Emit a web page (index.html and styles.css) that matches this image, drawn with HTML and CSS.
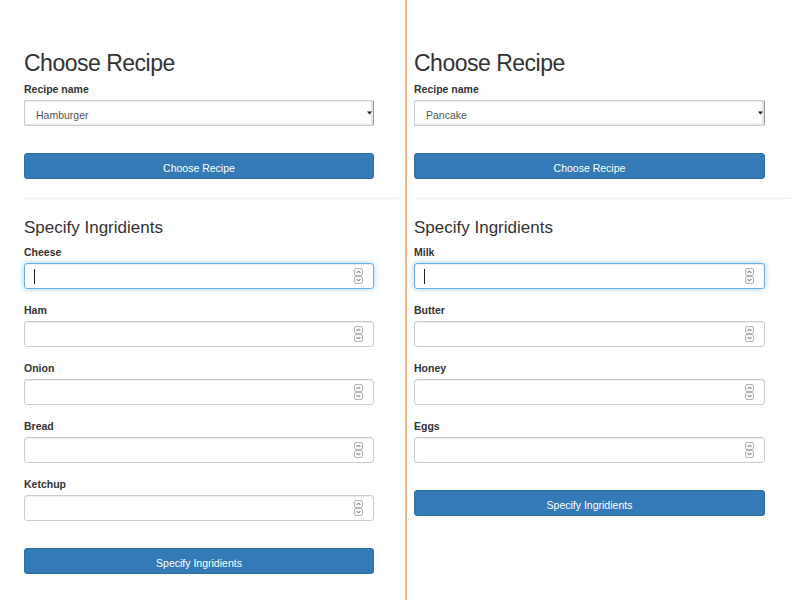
FILE: index.html
```html
<!DOCTYPE html>
<html lang="en">
<head>
  <meta charset="UTF-8" />
  <meta name="viewport" content="width=device-width, initial-scale=1.0" />
  <title>Recipes</title>
  <link rel="stylesheet" href="styles.css">
</head>
<body>
  <div class="frames">

    <!-- Hamburger frame -->
    <div class="pane pane-left">
      <form class="recipe-form">
        <h2 class="title">Choose Recipe</h2>
        <label class="field-label" for="recipe_a">Recipe name</label>
        <div class="select-box">
          <select id="recipe_a" class="select">
            <option selected>Hamburger</option>
            <option>Pancake</option>
          </select>
          <svg class="select-arrow" width="5" height="4" viewBox="0 0 5 4"><path d="M0 0.5 H5 L2.5 3.5 Z" fill="#111"/></svg>
        </div>
        <button type="button" class="btn-primary btn-choose">Choose Recipe</button>
      </form>

      <hr class="divider">

      <form class="recipe-form">
        <h3 class="subtitle">Specify Ingridients</h3>

        <div class="form-group">
          <label class="field-label" for="cheese">Cheese</label>
          <div class="num-field is-focused">
            <span class="caret"></span>
            <input type="text" inputmode="numeric" id="cheese" class="num-input">
            <svg class="spinner" width="9" height="16" viewBox="0 0 9 16"><rect x="0.5" y="0.5" width="8" height="7" rx="1.5" fill="#f7f7f7" stroke="#b5b5b5"/><path d="M2.6 5 L4.5 3 L6.4 5" fill="none" stroke="#555" stroke-width="0.9"/><rect x="0.5" y="8.5" width="8" height="7" rx="1.5" fill="#f7f7f7" stroke="#b5b5b5"/><path d="M2.6 11 L4.5 13 L6.4 11" fill="none" stroke="#555" stroke-width="0.9"/></svg>
          </div>
        </div>

        <div class="form-group">
          <label class="field-label" for="ham">Ham</label>
          <div class="num-field">
            <input type="text" inputmode="numeric" id="ham" class="num-input">
            <svg class="spinner" width="9" height="16" viewBox="0 0 9 16"><rect x="0.5" y="0.5" width="8" height="7" rx="1.5" fill="#f7f7f7" stroke="#b5b5b5"/><path d="M2.6 5 L4.5 3 L6.4 5" fill="none" stroke="#555" stroke-width="0.9"/><rect x="0.5" y="8.5" width="8" height="7" rx="1.5" fill="#f7f7f7" stroke="#b5b5b5"/><path d="M2.6 11 L4.5 13 L6.4 11" fill="none" stroke="#555" stroke-width="0.9"/></svg>
          </div>
        </div>

        <div class="form-group">
          <label class="field-label" for="onion">Onion</label>
          <div class="num-field">
            <input type="text" inputmode="numeric" id="onion" class="num-input">
            <svg class="spinner" width="9" height="16" viewBox="0 0 9 16"><rect x="0.5" y="0.5" width="8" height="7" rx="1.5" fill="#f7f7f7" stroke="#b5b5b5"/><path d="M2.6 5 L4.5 3 L6.4 5" fill="none" stroke="#555" stroke-width="0.9"/><rect x="0.5" y="8.5" width="8" height="7" rx="1.5" fill="#f7f7f7" stroke="#b5b5b5"/><path d="M2.6 11 L4.5 13 L6.4 11" fill="none" stroke="#555" stroke-width="0.9"/></svg>
          </div>
        </div>

        <div class="form-group">
          <label class="field-label" for="bread">Bread</label>
          <div class="num-field">
            <input type="text" inputmode="numeric" id="bread" class="num-input">
            <svg class="spinner" width="9" height="16" viewBox="0 0 9 16"><rect x="0.5" y="0.5" width="8" height="7" rx="1.5" fill="#f7f7f7" stroke="#b5b5b5"/><path d="M2.6 5 L4.5 3 L6.4 5" fill="none" stroke="#555" stroke-width="0.9"/><rect x="0.5" y="8.5" width="8" height="7" rx="1.5" fill="#f7f7f7" stroke="#b5b5b5"/><path d="M2.6 11 L4.5 13 L6.4 11" fill="none" stroke="#555" stroke-width="0.9"/></svg>
          </div>
        </div>

        <div class="form-group">
          <label class="field-label" for="ketchup">Ketchup</label>
          <div class="num-field">
            <input type="text" inputmode="numeric" id="ketchup" class="num-input">
            <svg class="spinner" width="9" height="16" viewBox="0 0 9 16"><rect x="0.5" y="0.5" width="8" height="7" rx="1.5" fill="#f7f7f7" stroke="#b5b5b5"/><path d="M2.6 5 L4.5 3 L6.4 5" fill="none" stroke="#555" stroke-width="0.9"/><rect x="0.5" y="8.5" width="8" height="7" rx="1.5" fill="#f7f7f7" stroke="#b5b5b5"/><path d="M2.6 11 L4.5 13 L6.4 11" fill="none" stroke="#555" stroke-width="0.9"/></svg>
          </div>
        </div>

        <button type="button" class="btn-primary btn-specify">Specify Ingridients</button>
      </form>
    </div>

    <!-- Pancake frame -->
    <div class="pane pane-right">
      <form class="recipe-form">
        <h2 class="title">Choose Recipe</h2>
        <label class="field-label" for="recipe_b">Recipe name</label>
        <div class="select-box">
          <select id="recipe_b" class="select">
            <option>Hamburger</option>
            <option selected>Pancake</option>
          </select>
          <svg class="select-arrow" width="5" height="4" viewBox="0 0 5 4"><path d="M0 0.5 H5 L2.5 3.5 Z" fill="#111"/></svg>
        </div>
        <button type="button" class="btn-primary btn-choose">Choose Recipe</button>
      </form>

      <hr class="divider">

      <form class="recipe-form">
        <h3 class="subtitle">Specify Ingridients</h3>

        <div class="form-group">
          <label class="field-label" for="milk">Milk</label>
          <div class="num-field is-focused">
            <span class="caret"></span>
            <input type="text" inputmode="numeric" id="milk" class="num-input">
            <svg class="spinner" width="9" height="16" viewBox="0 0 9 16"><rect x="0.5" y="0.5" width="8" height="7" rx="1.5" fill="#f7f7f7" stroke="#b5b5b5"/><path d="M2.6 5 L4.5 3 L6.4 5" fill="none" stroke="#555" stroke-width="0.9"/><rect x="0.5" y="8.5" width="8" height="7" rx="1.5" fill="#f7f7f7" stroke="#b5b5b5"/><path d="M2.6 11 L4.5 13 L6.4 11" fill="none" stroke="#555" stroke-width="0.9"/></svg>
          </div>
        </div>

        <div class="form-group">
          <label class="field-label" for="butter">Butter</label>
          <div class="num-field">
            <input type="text" inputmode="numeric" id="butter" class="num-input">
            <svg class="spinner" width="9" height="16" viewBox="0 0 9 16"><rect x="0.5" y="0.5" width="8" height="7" rx="1.5" fill="#f7f7f7" stroke="#b5b5b5"/><path d="M2.6 5 L4.5 3 L6.4 5" fill="none" stroke="#555" stroke-width="0.9"/><rect x="0.5" y="8.5" width="8" height="7" rx="1.5" fill="#f7f7f7" stroke="#b5b5b5"/><path d="M2.6 11 L4.5 13 L6.4 11" fill="none" stroke="#555" stroke-width="0.9"/></svg>
          </div>
        </div>

        <div class="form-group">
          <label class="field-label" for="honey">Honey</label>
          <div class="num-field">
            <input type="text" inputmode="numeric" id="honey" class="num-input">
            <svg class="spinner" width="9" height="16" viewBox="0 0 9 16"><rect x="0.5" y="0.5" width="8" height="7" rx="1.5" fill="#f7f7f7" stroke="#b5b5b5"/><path d="M2.6 5 L4.5 3 L6.4 5" fill="none" stroke="#555" stroke-width="0.9"/><rect x="0.5" y="8.5" width="8" height="7" rx="1.5" fill="#f7f7f7" stroke="#b5b5b5"/><path d="M2.6 11 L4.5 13 L6.4 11" fill="none" stroke="#555" stroke-width="0.9"/></svg>
          </div>
        </div>

        <div class="form-group">
          <label class="field-label" for="eggs">Eggs</label>
          <div class="num-field">
            <input type="text" inputmode="numeric" id="eggs" class="num-input">
            <svg class="spinner" width="9" height="16" viewBox="0 0 9 16"><rect x="0.5" y="0.5" width="8" height="7" rx="1.5" fill="#f7f7f7" stroke="#b5b5b5"/><path d="M2.6 5 L4.5 3 L6.4 5" fill="none" stroke="#555" stroke-width="0.9"/><rect x="0.5" y="8.5" width="8" height="7" rx="1.5" fill="#f7f7f7" stroke="#b5b5b5"/><path d="M2.6 11 L4.5 13 L6.4 11" fill="none" stroke="#555" stroke-width="0.9"/></svg>
          </div>
        </div>

        <button type="button" class="btn-primary btn-specify">Specify Ingridients</button>
      </form>
    </div>

  </div>
</body>
</html>
```

FILE: styles.css
```css
body {
  margin: 0;
  padding: 0;
  font-family: "Liberation Sans", Arial, sans-serif;
  color: #333;
  background-color: #fff;
}

.frames {
  display: flex;
  height: 600px;
  overflow: hidden;
}

.pane {
  box-sizing: border-box;
  padding-top: 50px;
}

.pane-left {
  width: 405px;
  padding-left: 24px;
}

.pane-right {
  flex: 1;
  padding-left: 7px;
  border-left: 2px solid #f3b687; /* frame separator */
}

.recipe-form {
  width: 350px;
  margin: 0;
}

.pane-right .recipe-form {
  width: 351px;
}

.title {
  margin: 0 0 6px;
  font-size: 23px;
  line-height: 26px;
  font-weight: 400;
  letter-spacing: -0.5px;
  color: #333;
}

.subtitle {
  margin: 19px 0 7px;
  font-size: 17px;
  line-height: 20px;
  font-weight: 400;
  color: #333;
}

.field-label {
  display: block;
  margin-bottom: 4px;
  font-size: 10.5px;
  line-height: 14px;
  font-weight: 700;
  color: #333;
}

/* select with the old gtk look */
.select-box {
  display: flex;
  align-items: center;
  box-sizing: border-box;
  height: 26px;
  border: 1px solid #ccc;
  border-right-color: #9a9a9a;
  border-radius: 2px;
  background-color: #fff;
  box-shadow: inset 0 1px 1px rgba(0, 0, 0, 0.06), inset -2px -1px 2px rgba(0, 0, 0, 0.12);
}

.select {
  flex: 1;
  height: 100%;
  border: none;
  outline: none;
  background: transparent;
  -webkit-appearance: none;
  appearance: none;
  padding: 3px 0 0 11px;
  font-family: inherit;
  font-size: 10.5px;
  color: #555;
}

.select-arrow {
  margin-right: 1px;
  flex-shrink: 0;
}

.btn-primary {
  display: block;
  box-sizing: border-box;
  width: 100%;
  height: 26px;
  padding: 3px 0 0;
  border: 1px solid #2e6da4;
  border-radius: 3px;
  background-color: #337ab7;
  color: #fff;
  font-family: inherit;
  font-size: 10.5px;
  cursor: pointer;
}

.btn-choose {
  margin-top: 27px;
}

.btn-specify {
  margin-top: 27px;
}

.divider {
  width: 377px;
  margin: 19px 0 0;
  border: 0;
  border-top: 1px solid #eee;
  height: 0;
}

.form-group {
  margin-bottom: 14px;
}

.num-field {
  display: flex;
  align-items: center;
  box-sizing: border-box;
  height: 26px;
  padding-left: 9px;
  border: 1px solid #ccc;
  border-radius: 3px;
  background-color: #fff;
  box-shadow: inset 0 1px 1px rgba(0, 0, 0, 0.075);
}

.num-field.is-focused {
  border-color: #66afe9;
  box-shadow: inset 0 1px 1px rgba(0, 0, 0, 0.075), 0 0 6px rgba(102, 175, 233, 0.6);
}

.caret {
  width: 1px;
  height: 15px;
  background-color: #222;
  flex-shrink: 0;
}

.num-input {
  flex: 1;
  min-width: 0;
  height: 100%;
  padding: 0;
  border: none;
  outline: none;
  background: transparent;
  font-family: inherit;
  font-size: 10.5px;
  color: #555;
}

.spinner {
  flex-shrink: 0;
  margin-right: 10px;
}
```
